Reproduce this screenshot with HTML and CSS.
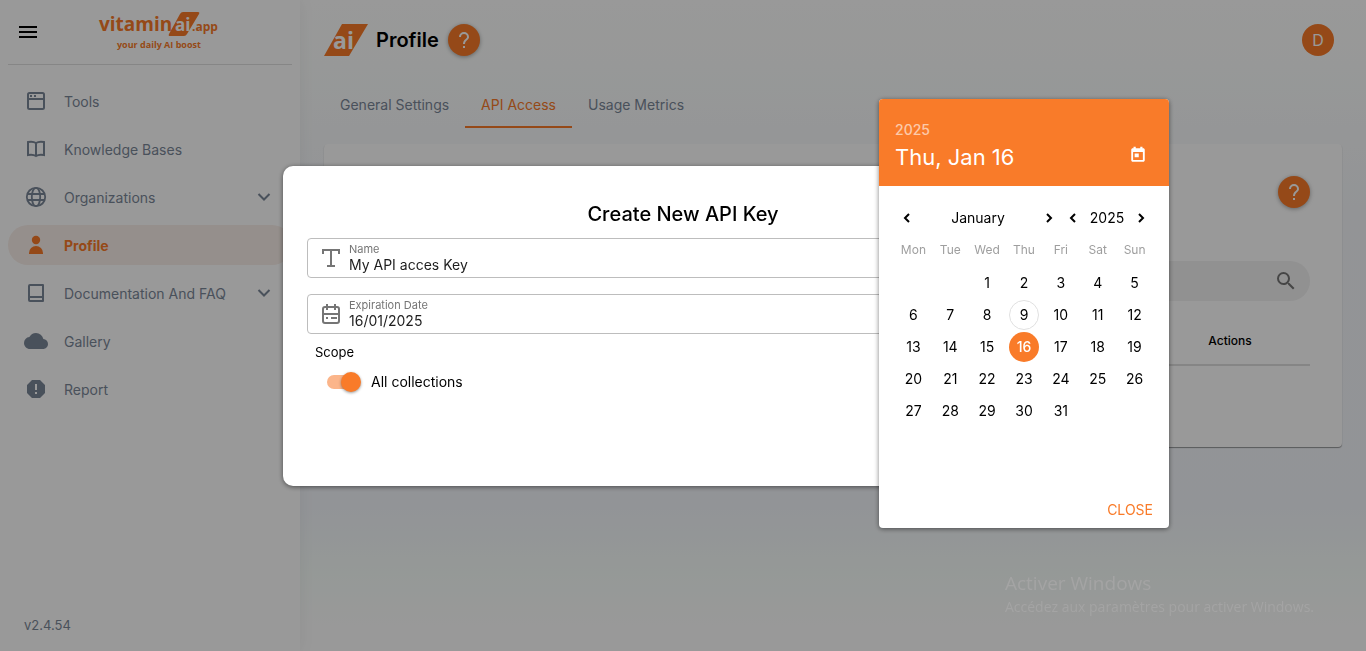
FILE: index.html
```html
<!DOCTYPE html>
<html lang="en">
<head>
<meta charset="utf-8">
<meta name="viewport" content="width=device-width, initial-scale=1">
<title>Profile - API Access</title>
<link rel="stylesheet" href="styles.css">
</head>
<body>
<div class="app">
  <aside class="sidebar">
    <div class="sidebar-head">
      <button class="icon-button" type="button" aria-label="Toggle menu">
        <svg width="24" height="24" viewBox="0 0 24 24"><path fill="currentColor" d="M3 18h18v-2H3zm0-5h18v-2H3zm0-7v2h18V6z"/></svg>
      </button>
      <svg class="brand" width="122" height="44" viewBox="0 0 122 44" role="img" aria-label="vitamin ai app, your daily AI boost">
        <path class="brand-fill" d="M87 2h15q2 0 1 2L91 24q-1 2-3 2H74q-2 0-1-2L84 4q1-2 3-2z"/>
        <text class="brand-text" x="3" y="21" font-size="19">vitamin</text>
        <text class="brand-ai" x="79" y="21" font-size="17">ai</text>
        <text class="brand-text" x="96" y="21" font-size="12">.app</text>
        <text class="brand-text" x="21" y="38" font-size="9">your daily AI boost</text>
      </svg>
    </div>
    <nav class="menu">
      <a class="menu-item" href="#"><svg class="menu-icon" viewBox="0 0 24 24"><g fill="none" stroke="currentColor" stroke-width="2"><rect x="4" y="4" width="16" height="16" rx="1.5"/><path d="M4 10h16"/></g><path fill="currentColor" d="M6 6h2v2H6zM10 6h2v2h-2z"/></svg><span>Tools</span></a>
      <a class="menu-item" href="#"><svg class="menu-icon" viewBox="0 0 24 24"><path d="M4 5q5-1 8 1 3-2 8-1v13q-5-1-8 1-3-2-8-1zM12 6v13" fill="none" stroke="currentColor" stroke-width="2"/></svg><span>Knowledge Bases</span></a>
      <a class="menu-item" href="#"><svg class="menu-icon" viewBox="0 0 24 24"><g fill="none" stroke="currentColor" stroke-width="1.8"><circle cx="12" cy="12" r="9.2"/><ellipse cx="12" cy="12" rx="4.2" ry="9.2"/><path d="M3.4 9h17.2M3.4 15h17.2"/></g></svg><span>Organizations</span><svg class="chevron" viewBox="0 0 24 24"><path d="M6.5 9l5.5 5.5L17.5 9" fill="none" stroke="currentColor" stroke-width="2"/></svg></a>
      <a class="menu-item is-active" href="#" aria-current="page"><svg class="menu-icon" viewBox="0 0 24 24"><path fill="currentColor" d="M5 21v-1a7 7 0 0 1 14 0v1z"/><circle fill="currentColor" cx="12" cy="7" r="4.2"/></svg><span>Profile</span></a>
      <a class="menu-item" href="#"><svg class="menu-icon" viewBox="0 0 24 24"><path d="M5 19V5q0-1 1-1h13v16H6q-1 0-1-1zM5 16h14" fill="none" stroke="currentColor" stroke-width="2" stroke-linejoin="round"/></svg><span>Documentation And FAQ</span><svg class="chevron" viewBox="0 0 24 24"><path d="M6.5 9l5.5 5.5L17.5 9" fill="none" stroke="currentColor" stroke-width="2"/></svg></a>
      <a class="menu-item" href="#"><svg class="menu-icon" viewBox="0 0 24 24"><path fill="currentColor" d="M19.35 10.04A7.49 7.49 0 0 0 12 4C9.11 4 6.6 5.64 5.35 8.04A5.994 5.994 0 0 0 0 14c0 3.31 2.69 6 6 6h13c2.76 0 5-2.24 5-5 0-2.64-2.05-4.78-4.65-4.96z"/></svg><span>Gallery</span></a>
      <a class="menu-item" href="#"><svg class="menu-icon" viewBox="0 0 24 24"><path fill="currentColor" fill-rule="evenodd" d="M8 3h8l5 5v8l-5 5H8l-5-5V8zm3 4v6h2V7zm0 8v2h2v-2z"/></svg><span>Report</span></a>
    </nav>
    <div class="version">v2.4.54</div>
  </aside>

  <main class="content">
    <header class="page-head">
      <svg class="page-logo" width="44" height="32" viewBox="0 0 44 32" aria-hidden="true"><path class="brand-fill" d="M18 0h26L25 32H0z"/><text class="brand-ai" x="9" y="25" font-size="23">ai</text></svg>
      <h1>Profile</h1>
      <button class="round-button raised" type="button" aria-label="Help"><svg width="24" height="24" viewBox="0 0 24 24"><path fill="currentColor" d="M11 18h2v2h-2zM12 4a5 5 0 0 0-5 5h2a3 3 0 1 1 6 0c0 2-4 2.5-4 7h2c0-3.5 4-4 4-7a5 5 0 0 0-5-5z"/></svg></button>
      <button class="round-button avatar" type="button">D</button>
    </header>
    <nav class="tabs">
      <a class="tab" href="#">General Settings</a>
      <a class="tab is-current" href="#">API Access</a>
      <a class="tab" href="#">Usage Metrics</a>
    </nav>
    <section class="card">
      <div class="card-head">
        <button class="round-button raised" type="button" aria-label="Help"><svg width="24" height="24" viewBox="0 0 24 24"><path fill="currentColor" d="M11 18h2v2h-2zM12 4a5 5 0 0 0-5 5h2a3 3 0 1 1 6 0c0 2-4 2.5-4 7h2c0-3.5 4-4 4-7a5 5 0 0 0-5-5z"/></svg></button>
      </div>
      <label class="search">
        <input type="text" aria-label="Search">
        <svg width="24" height="24" viewBox="0 0 24 24"><path fill="currentColor" d="M15.5 14h-.79l-.28-.27A6.471 6.471 0 0 0 16 9.5 6.5 6.5 0 1 0 9.5 16c1.61 0 3.09-.59 4.23-1.57l.27.28v.79l5 4.99L20.49 19zm-6 0C7.01 14 5 11.99 5 9.5S7.01 5 9.5 5 14 7.01 14 9.5 11.99 14 9.5 14z"/></svg>
      </label>
      <table class="keys">
        <thead><tr><td></td><th scope="col">Actions</th></tr></thead>
      </table>
    </section>
  </main>
</div>

<div class="backdrop">
  <form class="dialog" role="dialog" aria-labelledby="dialog-title">
    <h2 id="dialog-title">Create New API Key</h2>
    <div class="fields">
      <div class="field">
        <svg width="24" height="24" viewBox="0 0 24 24"><path d="M4 8V4h16v4M12 4v16M8 20h8" fill="none" stroke="currentColor" stroke-width="2"/></svg>
        <div class="field-body"><label for="key-name">Name</label><input id="key-name" type="text" value="My API acces Key"></div>
      </div>
      <div class="field">
        <svg width="24" height="24" viewBox="0 0 24 24"><g fill="none" stroke="currentColor" stroke-width="2"><rect x="4" y="5" width="16" height="16" rx="2"/><path d="M4 12h16M8 2v6M16 2v6M7 16h2M12 16h6"/></g></svg>
        <div class="field-body"><label for="key-date">Expiration Date</label><input id="key-date" type="text" value="16/01/2025"></div>
      </div>
    </div>
    <div class="scope">Scope</div>
    <label class="toggle"><input type="checkbox" checked><span>All collections</span></label>
  </form>

  <div class="picker" role="dialog" aria-label="Expiration date">
    <div class="picker-head">
      <div><div class="picker-year">2025</div><div class="picker-date">Thu, Jan 16</div></div>
      <button class="today" type="button" aria-label="Today"><svg width="18" height="18" viewBox="0 0 24 24"><path fill="currentColor" d="M19 3h-1V1h-3v2H9V1H6v2H5c-1.11 0-2 .9-2 2v14c0 1.1.89 2 2 2h14c1.1 0 2-.9 2-2V5c0-1.1-.9-2-2-2zm-.5 15.500h-13V8h13zM7.500 10h5.500v5H7.500z"/></svg></button>
    </div>
    <div class="picker-nav">
      <button type="button" aria-label="Previous month"><svg viewBox="0 0 16 16"><path d="M10 4L6 8l4 4"/></svg></button>
      <button class="nav-month" type="button">January</button>
      <button type="button" aria-label="Next month"><svg viewBox="0 0 16 16"><path d="M6 4l4 4-4 4"/></svg></button>
      <button type="button" aria-label="Previous year"><svg viewBox="0 0 16 16"><path d="M10 4L6 8l4 4"/></svg></button>
      <button class="nav-year" type="button">2025</button>
      <button type="button" aria-label="Next year"><svg viewBox="0 0 16 16"><path d="M6 4l4 4-4 4"/></svg></button>
    </div>
    <div class="week"><span>Mon</span><span>Tue</span><span>Wed</span><span>Thu</span><span>Fri</span><span>Sat</span><span>Sun</span></div>
    <div class="days">
      <button class="first" type="button">1</button><button type="button">2</button><button type="button">3</button><button type="button">4</button><button type="button">5</button>
      <button type="button">6</button><button type="button">7</button><button type="button">8</button><button class="is-today" type="button">9</button><button type="button">10</button><button type="button">11</button><button type="button">12</button>
      <button type="button">13</button><button type="button">14</button><button type="button">15</button><button class="is-selected" type="button">16</button><button type="button">17</button><button type="button">18</button><button type="button">19</button>
      <button type="button">20</button><button type="button">21</button><button type="button">22</button><button type="button">23</button><button type="button">24</button><button type="button">25</button><button type="button">26</button>
      <button type="button">27</button><button type="button">28</button><button type="button">29</button><button type="button">30</button><button type="button">31</button>
    </div>
    <div class="picker-foot"><button class="close" type="button">CLOSE</button></div>
  </div>
</div>

<div class="watermark"><div class="watermark-title">Activer Windows</div><div>Accédez aux paramètres pour activer Windows.</div></div>
</body>
</html>
```
FILE: styles.css
```css
:root {
  --orange: #f97b29;
  --slate: #7b8798;
}

* { box-sizing: border-box; }

body {
  margin: 0;
  font-family: Inter, "Open Sans", sans-serif;
  font-size: 14px;
  line-height: 20px;
  color: #000;
}

button {
  padding: 0;
  border: 0;
  background: none;
  font: inherit;
  color: inherit;
}

input { font: inherit; color: inherit; }
a { color: inherit; text-decoration: none; }
svg { display: block; flex: none; }
h1, h2 { margin: 0; }

.app {
  display: flex;
  min-height: 100vh;
  background: linear-gradient(#fff, #fcfefd 10%, #f5f7fb 32%, #f4f7fc 78%, #f9fffc 88%, #fff 96%);
}

/* Sidebar */
.sidebar {
  display: flex;
  flex-direction: column;
  flex: none;
  width: 300px;
  padding: 0 8px;
  background: #fff;
  color: var(--slate);
  box-shadow: 0 0 16px rgba(0, 0, 0, 0.06);
}

.sidebar-head {
  display: flex;
  align-items: center;
  gap: 56px;
  height: 65px;
  padding-left: 8px;
  border-bottom: 1px solid #e0e0e0;
}

.icon-button { color: #000; }

.brand-fill { fill: var(--orange); }

.brand,
.page-logo { overflow: visible; }

.brand-text,
.brand-ai {
  font-family: "Open Sans", sans-serif;
  font-weight: 700;
  fill: var(--orange);
}

.brand-ai { fill: #fff; }

.menu {
  display: flex;
  flex-direction: column;
  gap: 8px;
  padding-top: 16px;
}

.menu-item {
  display: flex;
  align-items: center;
  height: 40px;
  padding: 0 16px;
  border-radius: 20px;
  font-size: 14px;
}

.menu-item span { padding-top: 2px; }

.menu-item.is-active {
  background: #f9efe9;
  color: var(--orange);
  font-weight: 700;
}

.menu-icon { width: 24px; height: 24px; margin-right: 16px; }
.chevron { width: 24px; height: 24px; margin-left: auto; }

.version {
  margin-top: auto;
  padding: 16px;
  font-size: 13px;
}

/* Page content */
.content { flex: 1; padding: 24px; }

.page-head { display: flex; align-items: center; padding-right: 8px; }

.page-head h1 {
  margin: 0 9px 0 8px;
  font-size: 20px;
  font-weight: 600;
  line-height: 32px;
}

.round-button {
  display: flex;
  align-items: center;
  justify-content: center;
  width: 32px;
  height: 32px;
  border-radius: 50%;
  background: var(--orange);
  color: #fff;
}

.raised { box-shadow: 0 1px 4px rgba(0, 0, 0, 0.35); }
.avatar { margin-left: auto; font-size: 16px; }

.tabs { display: flex; margin: 24px 0 16px; color: var(--slate); }

.tab {
  padding: 16px 16px 12px;
  border-bottom: 2px solid transparent;
  line-height: 18px;
}

.tab.is-current { border-color: var(--orange); color: var(--orange); }

.card {
  min-height: 303px;
  padding: 32px;
  border-radius: 4px;
  background: #fff;
  box-shadow: 0 1px 1px rgba(0, 0, 0, 0.4);
}

.card-head { display: flex; justify-content: flex-end; margin-bottom: 53px; }

.search {
  display: flex;
  align-items: center;
  height: 40px;
  padding: 0 12px;
  border-radius: 20px;
  background: #f2f2f2;
  color: #757575;
}

.search input {
  flex: 1;
  border: 0;
  background: none;
}

.keys {
  width: 100%;
  margin-top: 16px;
  border-collapse: collapse;
  font-size: 12px;
}

.keys td, .keys th { height: 48px; padding: 0; border-bottom: 2px solid #dedede; }
.keys th { width: 160px; font-weight: 500; }

/* Dialog */
.backdrop {
  position: fixed;
  inset: 0;
  display: flex;
  align-items: center;
  justify-content: center;
  background: rgba(0, 0, 0, 0.4);
}

.dialog {
  width: 100%;
  max-width: 800px;
  min-height: 320px;
  padding: 24px;
  border-radius: 10px;
  background: #fff;
  box-shadow: 0 1px 5px rgba(0, 0, 0, 0.5);
}

.dialog h2 {
  font-size: 20px;
  font-weight: 500;
  line-height: 48px;
  text-align: center;
}

.fields { display: flex; flex-direction: column; gap: 16px; }

.field {
  display: flex;
  align-items: center;
  gap: 6px;
  height: 40px;
  padding: 0 11px;
  border: 1px solid #bdbdbd;
  border-radius: 4px;
  color: #757575;
}

.field-body { display: flex; flex: 1; flex-direction: column; }
.field label { padding-top: 1px; font-size: 11px; line-height: 14px; }

.field input {
  width: 100%;
  height: 18px;
  padding: 0;
  border: 0;
  background: none;
  color: #1d1d1d;
  outline: 0;
}

.scope { padding-left: 8px; font-size: 13px; line-height: 36px; }

.toggle {
  display: flex;
  align-items: center;
  gap: 12px;
  padding: 2px 20px;
}

.toggle input {
  position: relative;
  width: 32px;
  height: 14px;
  margin: 0;
  border-radius: 7px;
  appearance: none;
  background: #fbb58a;
}

.toggle input::after {
  content: "";
  position: absolute;
  top: -3px;
  right: -2px;
  width: 20px;
  height: 20px;
  border-radius: 50%;
  background: var(--orange);
  box-shadow: 0 1px 3px rgba(0, 0, 0, 0.4);
}

/* Date picker popup */
.picker {
  position: absolute;
  top: 99px;
  left: calc(50% + 196px);
  display: flex;
  flex-direction: column;
  width: 290px;
  min-height: 429px;
  overflow: hidden;
  border-radius: 4px;
  background: #fff;
  box-shadow: 0 1px 5px rgba(0, 0, 0, 0.5);
}

.picker-head {
  display: flex;
  align-items: flex-end;
  justify-content: space-between;
  height: 87px;
  padding: 16px 22px 12px 16px;
  background: var(--orange);
  color: #fff;
}

.picker-year { font-weight: 500; opacity: 0.6; }
.picker-date { font-size: 22px; line-height: 34px; }
.today { padding-bottom: 10px; }

.picker-nav { display: flex; padding: 16px 16px 0; }

.picker-nav button {
  display: flex;
  align-items: center;
  justify-content: center;
  width: 24px;
  height: 32px;
}

.picker-nav svg { width: 16px; height: 16px; fill: none; stroke: #000; stroke-width: 2; }
.picker-nav .nav-month { flex: 1; }
.picker-nav .nav-year { width: 44px; }

.week,
.days {
  display: grid;
  grid-template-columns: repeat(7, 1fr);
  justify-items: center;
  padding: 0 16px;
}

.week { font-size: 12px; line-height: 32px; color: #9e9e9e; }
.days { row-gap: 2px; padding-top: 2px; }
.days button { width: 30px; height: 30px; border-radius: 50%; }
.days .first { grid-column: 3; }
.days .is-today { border: 1px solid #e0e0e0; }
.days .is-selected { background: var(--orange); color: #fff; font-weight: 500; }

.picker-foot { margin-top: auto; padding: 8px 16px; text-align: right; }
.close { color: var(--orange); }

/* System notice over the desktop */
.watermark {
  position: fixed;
  right: 52px;
  bottom: 34px;
  font-family: "Open Sans", sans-serif;
  font-size: 14px;
  color: #a4a4a4;
  pointer-events: none;
}

.watermark-title { font-size: 19px; line-height: 28px; }
```
